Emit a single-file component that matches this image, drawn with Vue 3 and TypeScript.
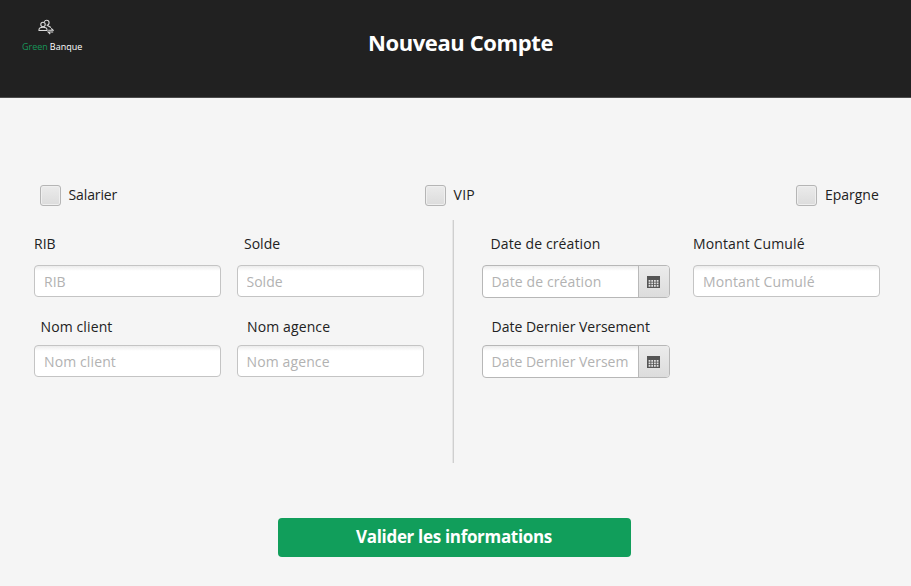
<script setup lang="ts">
import { reactive } from 'vue'

interface Field {
  id: string
  label: string
  indent: number
  date?: boolean
}

const checks = reactive([
  { id: 'salarier', label: 'Salarier', on: false },
  { id: 'vip', label: 'VIP', on: false },
  { id: 'epargne', label: 'Epargne', on: false },
])

const accountFields: Field[] = [
  { id: 'rib', label: 'RIB', indent: 0 },
  { id: 'solde', label: 'Solde', indent: 7.5 },
  { id: 'client', label: 'Nom client', indent: 6.5 },
  { id: 'agence', label: 'Nom agence', indent: 10.5 },
]

const savingFields: Field[] = [
  { id: 'creation', label: 'Date de création', indent: 9, date: true },
  { id: 'cumul', label: 'Montant Cumulé', indent: 0 },
  { id: 'versement', label: 'Date Dernier Versement', indent: 10, date: true },
]

const groups = [
  { name: 'account', fields: accountFields },
  { name: 'saving', fields: savingFields },
]

const values = reactive<Record<string, string>>({})
</script>

<template>
  <div class="page">
    <header class="header">
      <div class="brand">
        <svg class="brand-icon" viewBox="0 0 16 16" fill="none" stroke="#dcdcdc" stroke-width="1.100">
          <circle cx="5" cy="5.500" r="2.200" />
          <path d="M1 11.500v-.8c0-1.600 1.500-2.500 4-2.500s4 .9 4 2.500v.8z" />
          <path d="M6.300 2.900C6.800 1.700 7.600 1.200 8.600 1.200c1.500 0 2.500 1.100 2.500 2.500S10.100 6.200 8.600 6.200M9.500 6.400l3.500 2" />
          <path d="M10.200 11.300h5l-2-2M15.200 13h-5l2 2" />
        </svg>
        <div class="brand-name"><span class="green">Green</span><span>Banque</span></div>
      </div>
      <h1 class="title">Nouveau Compte</h1>
    </header>

    <form class="form" @submit.prevent>
      <div class="checks">
        <label v-for="c in checks" :key="c.id" class="check">
          <input v-model="c.on" type="checkbox" class="box" />
          <span :class="c.id">{{ c.label }}</span>
        </label>
      </div>

      <div class="groups">
        <div v-for="g in groups" :key="g.name" class="group" :class="g.name">
          <div v-for="f in g.fields" :key="f.id" class="field">
            <label :for="f.id" class="label" :class="f.id" :style="{ paddingLeft: f.indent + 'px' }">{{ f.label }}</label>
            <div class="control" :class="{ date: f.date }">
              <input :id="f.id" v-model="values[f.id]" type="text" class="input" :class="f.id" :placeholder="f.label" />
              <button v-if="f.date" type="button" class="picker">
                <svg class="calendar" viewBox="0 0 13 12">
                  <path fill="#555" d="M0 0h13v12H0z" />
                  <path
                    stroke="#e0e0e0"
                    stroke-width="1.600"
                    stroke-dasharray="1.800 .9"
                    d="M1.600 4.900h10M1.600 7.400h10M1.600 9.900h10"
                  />
                </svg>
              </button>
            </div>
          </div>
        </div>
      </div>

      <button type="submit" class="submit">Valider les informations</button>
    </form>
  </div>
</template>

<style>
body {
  background: #f5f5f5;
}
</style>

<style scoped>
.page {
  box-sizing: border-box;
  width: 911px;
  height: 586px;
  overflow: hidden;
  background: #f5f5f5;
  color: #222;
  font-family: "Open Sans", "Noto Sans", sans-serif;
  font-size: 14px;
}
.header {
  box-sizing: border-box;
  display: grid;
  grid-template-columns: 296px 1fr 286px;
  height: 98px;
  background: #212121;
  border-bottom: 1px solid #4c4c4c;
}
.brand {
  padding: 19px 0 0 22px;
}
.brand-icon {
  display: block;
  width: 16px;
  height: 16px;
  margin-left: 16px;
}
.brand-name {
  display: flex;
  gap: 2px;
  margin-top: 5px;
  color: #fff;
  font-size: 9px;
  line-height: 13px;
}
.green {
  color: #17965a;
}
.title {
  margin: 26px 0 0;
  color: #fff;
  font-size: 22px;
  font-weight: 700;
  letter-spacing: -0.400px;
  line-height: 32px;
  text-align: center;
  white-space: nowrap;
}
.form {
  display: flex;
  flex-direction: column;
  padding-top: 87px;
}
.checks {
  display: grid;
  grid-template-columns: 385px 371.400px 1fr;
  padding-left: 40px;
}
.check {
  display: flex;
  gap: 7.500px;
  height: 21px;
  line-height: 20px;
}
.salarier {
  letter-spacing: -0.120px;
}
.vip {
  letter-spacing: 0.300px;
}
.box {
  box-sizing: border-box;
  width: 21px;
  height: 21px;
  margin: 0;
  appearance: none;
  background: linear-gradient(#ebebeb, #dcdcdc);
  border: 1px solid #b5b5b5;
  border-radius: 3px;
  box-shadow: inset 0 0 0 1px #efefef;
}
.groups {
  display: flex;
  height: 243px;
  margin-top: 14px;
}
.group {
  display: grid;
  align-content: start;
  padding-top: 14px;
  row-gap: 3px;
}
.account {
  box-sizing: border-box;
  width: 454px;
  grid-template-columns: 187px 187px;
  column-gap: 15.500px;
  padding-left: 34px;
  border-right: 1px solid #cfcfcf;
  box-shadow: inset -1px 0 #e6e6e6;
}
.saving {
  grid-template-columns: 188px 187px;
  column-gap: 23.500px;
  padding-left: 27.500px;
}
.field {
  height: 77px;
}
.label {
  box-sizing: border-box;
  display: block;
  height: 31px;
  line-height: 20px;
  white-space: nowrap;
}
.field:nth-child(n + 3) .label {
  padding-top: 3px;
}
.client,
.agence,
.creation,
.cumul {
  letter-spacing: 0.120px;
}
.control {
  box-sizing: border-box;
  display: flex;
  height: 32px;
  overflow: hidden;
  background: linear-gradient(#ececec, #fff 5px);
  border: 1px solid #c4c4c4;
  border-radius: 4px;
}
.control.date {
  height: 33px;
  border-color: #b7b7b7;
}
.input {
  flex: 1;
  min-width: 0;
  padding: 0 9px;
  background: none;
  border: 0;
  outline: 0;
  color: #222;
  font-family: inherit;
  font-size: 14px;
}
.input::placeholder {
  color: #b2b2b2;
  opacity: 1;
}
.picker {
  display: grid;
  place-items: center;
  width: 31px;
  padding: 0;
  background: linear-gradient(#ececec, #dcdcdc);
  border: 0;
  border-left: 1px solid #b9b9b9;
}
.calendar {
  width: 13px;
  height: 12px;
}
.submit {
  align-self: center;
  width: 353px;
  height: 39px;
  margin: 55px 3px 0 0;
  padding: 0 0 2px;
  background: #119e5b;
  border: 0;
  border-radius: 4px;
  color: #fff;
  font-family: inherit;
  font-size: 17px;
  font-weight: 700;
  letter-spacing: -0.320px;
}
</style>
